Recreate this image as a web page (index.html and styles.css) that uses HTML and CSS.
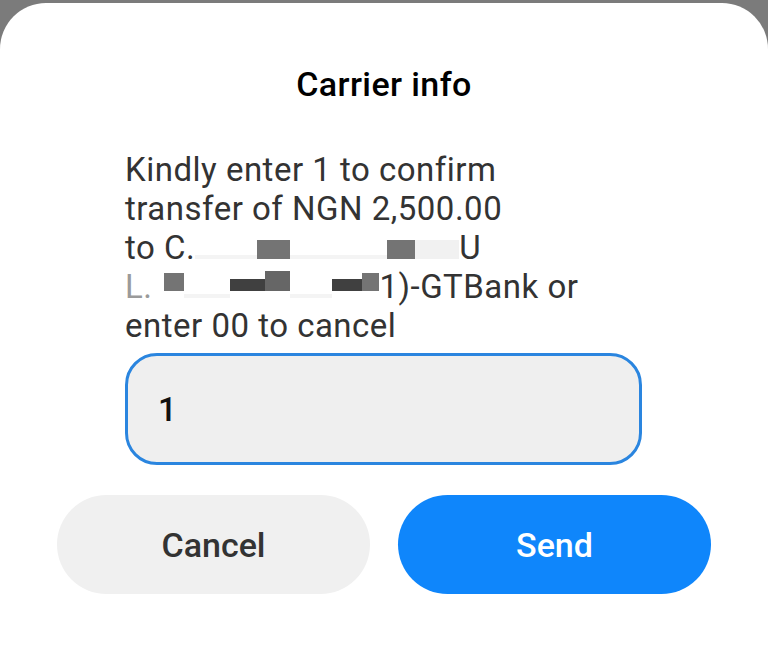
FILE: index.html
```html
<!DOCTYPE html>
<html>
<head>
  <meta charset="UTF-8">
  <title>Carrier info</title>
  <link rel="stylesheet" href="styles.css">
</head>
<body>
<div class="dialog">
  <h1 class="title">Carrier info</h1>
  <p class="message">
    Kindly enter 1 to confirm<br>
    transfer of NGN 2,500.00<br>
    to C.<span class="pix gap" style="width:62px"></span><span class="pix mid" style="width:33px"></span><span class="pix gap" style="width:97px"></span><span class="pix mid" style="width:28px"></span><span class="pix light" style="width:44px"></span>U<br>
    <span class="faint">L.</span><span class="pix low mid" style="width:20px;margin-left:12px"></span><span class="pix gap" style="width:46px"></span><span class="pix low short dark" style="width:35px"></span><span class="pix low grey" style="width:25px"></span><span class="pix gap" style="width:42px"></span><span class="pix low short dark" style="width:30px"></span><span class="pix low mid" style="width:17px"></span>1)-GTBank or<br>
    enter 00 to cancel
  </p>
  <div class="field">1</div>
  <div class="actions">
    <button class="btn btn_cancel">Cancel</button>
    <button class="btn btn_send">Send</button>
  </div>
</div>
</body>
</html>
```

FILE: styles.css
```css
* {
  margin: 0;
  padding: 0;
  box-sizing: border-box;
}
html, body {
  height: 100%;
}
body {
  background-color: #7b7b7b;
  font-family: Roboto, "Liberation Sans", sans-serif;
  overflow: hidden;
}
.dialog {
  margin-top: 3px;
  height: 646px;
  padding: 61px 57px 0 57px;
  background-color: #fff;
  border-radius: 46px 46px 0 0;
}
.title {
  font-size: 34px;
  line-height: 40px;
  font-weight: 500;
  letter-spacing: 0.4px;
  color: #000;
  text-align: center;
}
.message {
  margin: 46px 0 0 68px;
  font-size: 33px;
  line-height: 39px;
  letter-spacing: 0.5px;
  color: #333;
}
.pix {
  display: inline-block;
  height: 19px;
  vertical-align: baseline;
}
.pix.low {
  height: 18px;
  vertical-align: 7px;
}
.pix.low.short {
  height: 12px;
}
.pix.gap {
  height: 4px;
  background-color: #f4f4f4;
}
.pix.light {
  background-color: #f1f1f1;
}
.pix.mid {
  background-color: #747474;
}
.pix.grey {
  height: 20px;
  background-color: #666;
}
.pix.dark {
  background-color: #404040;
}
.faint {
  color: #9a9a9a;
}
.field {
  margin: 8px 69px 0 68px;
  height: 112px;
  padding: 0 30px;
  display: flex;
  align-items: center;
  border: 3px solid #2a85df;
  border-radius: 32px;
  background-color: #efefef;
  font-size: 33px;
  font-weight: 500;
  color: #111;
}
.actions {
  margin-top: 30px;
  display: flex;
  gap: 28px;
}
.btn {
  flex: 1;
  height: 99px;
  border: none;
  border-radius: 50px;
  font-family: Roboto, "Liberation Sans", sans-serif;
  font-size: 34px;
  font-weight: 500;
}
.btn_cancel {
  background-color: #f0f0f0;
  color: #333;
}
.btn_send {
  background-color: #0f86fb;
  color: #fff;
}
```
